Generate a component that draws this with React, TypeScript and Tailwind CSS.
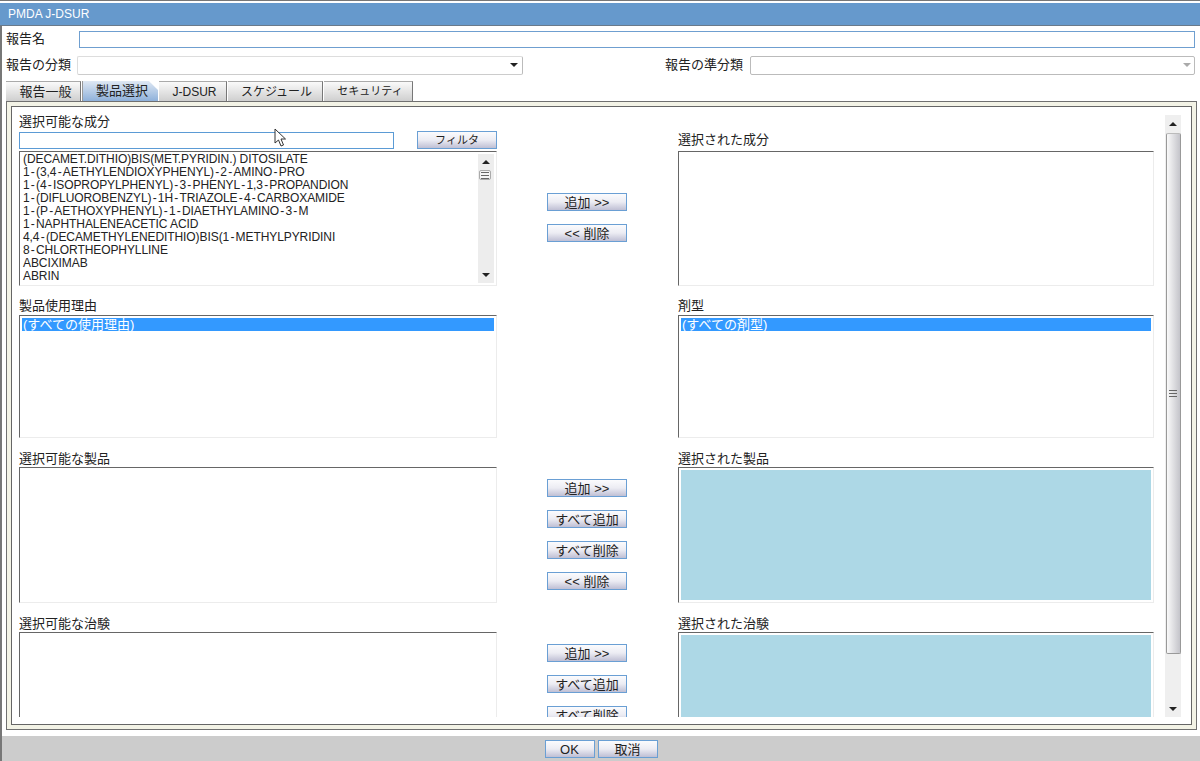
const font = '"Liberation Sans","Noto Sans CJK JP",sans-serif';

function Btn({ children, className = "w-[80px]", text = "text-[13px]" }: { children: React.ReactNode; className?: string; text?: string }) {
  return (
    <div className={`${className} ${text} h-[18px] shrink-0 border border-[#6a9fd4] bg-gradient-to-b from-[#fbfbfd] via-[#ececf3] via-50% to-[#bfbfd4] flex items-center justify-center leading-none text-[#222]`}>
      {children}
    </div>
  );
}

function ListBox({ className, children }: { className: string; children?: React.ReactNode }) {
  return (
    <div className={`${className} relative overflow-hidden bg-white border-t border-l border-t-[#666] border-l-[#666] border-r border-b border-r-[#ececec] border-b-[#ececec]`}>
      {children}
    </div>
  );
}

function Tri({ up, className = "border-x-[4px]" }: { up?: boolean; className?: string }) {
  return <div className={`${className} w-0 h-0 border-x-transparent ${up ? "border-b-[4px] border-b-[#222]" : "border-t-[4px] border-t-[#222]"}`} />;
}

function Grip() {
  return (
    <svg width="8" height="7" viewBox="0 0 8 7" className="block">
      <path d="M0 .5h8M0 3.5h8M0 6.5h8" stroke="#666" strokeWidth="1" fill="none" />
    </svg>
  );
}

function SelectedRow({ text }: { text: string }) {
  return (
    <div className="mx-[2px] mt-[2px] h-[13px] bg-[#3399ff] text-white text-[13px] leading-[13px] pl-[1px] whitespace-nowrap">{text}</div>
  );
}

function Label({ children, className = "" }: { children: React.ReactNode; className?: string }) {
  return <div className={`h-[18px] leading-[20px] text-[13px] text-[#222] whitespace-nowrap ${className}`}>{children}</div>;
}

function BlueFill() {
  return <div className="absolute inset-x-[2px] top-[2px] bottom-[2px] bg-[#add8e6]" />;
}

function Item({ text }: { text: string }) {
  const parts = text.split("-");
  return (
    <div>
      {parts.map((p, i) => (
        <span key={i}>
          {i > 0 && <span className="px-[1.25px]">-</span>}
          {p}
        </span>
      ))}
    </div>
  );
}

const items = [
  "(DECAMET.DITHIO)BIS(MET.PYRIDIN.) DITOSILATE",
  "1-(3,4-AETHYLENDIOXYPHENYL)-2-AMINO-PRO",
  "1-(4-ISOPROPYLPHENYL)-3-PHENYL-1,3-PROPANDION",
  "1-(DIFLUOROBENZYL)-1H-TRIAZOLE-4-CARBOXAMIDE",
  "1-(P-AETHOXYPHENYL)-1-DIAETHYLAMINO-3-M",
  "1-NAPHTHALENEACETIC ACID",
  "4,4-(DECAMETHYLENEDITHIO)BIS(1-METHYLPYRIDINI",
  "8-CHLORTHEOPHYLLINE",
  "ABCIXIMAB",
  "ABRIN",
];

const tabs = [
  ["報告一般", "w-[75px] pl-[5px] text-[13px]"],
  ["製品選択", "w-[76px] pl-[3px] text-[13px]"],
  ["J-DSUR", "w-[68px] pl-[4px] text-[12px]"],
  ["スケジュール", "w-[95px] pl-[3px] text-[12px]"],
  ["セキュリティ", "w-[89px] pl-[4px] text-[11px]"],
];

const grid = "grid grid-cols-[478px_50px_80px_51px_476px]";

export default function App() {
  return (
    <div className="relative w-[1200px] h-[761px] overflow-hidden bg-white flex flex-col text-[#222]" style={{ fontFamily: font }}>
      <div className="h-[3px] shrink-0 border-t border-t-[#777] bg-white" />
      <div className="h-[23px] shrink-0 bg-[#6699cc] border-b border-b-[#6a7a8a] text-white text-[12px] flex items-center pl-[8px]">PMDA J-DSUR</div>

      <div className="flex-1 flex flex-col border-l-2 border-l-[#777] min-h-0">
        <div className="h-[26px] shrink-0 flex items-center pl-[4px] pr-[5px]">
          <span className="w-[73px] text-[13px]">報告名</span>
          <div className="flex-1 h-[17px] border border-[#6f9fd0] bg-white" />
        </div>

        <div className="h-[26px] shrink-0 flex items-center pl-[4px] pr-[5px]">
          <span className="w-[71px] text-[13px] whitespace-nowrap">報告の分類</span>
          <div className="w-[446px] h-[19px] border border-[#ddd] rounded-[2px] border-r-[#bbb] border-b-[#ccc] flex items-center justify-end pr-[3px]">
            <Tri className="border-x-[4px] mr-[1px]" />
          </div>
          <span className="ml-[142px] w-[85px] text-[13px] whitespace-nowrap">報告の準分類</span>
          <div className="flex-1 h-[19px] border border-[#bbb] rounded-[2px] flex items-center justify-end pr-[3px]">
            <div className="w-0 h-0 border-x-[4px] border-x-transparent border-t-[4px] border-t-[#aaa]" />
          </div>
        </div>

        <div className="h-[20px] mt-[3px] shrink-0 flex pl-[4px] gap-[1px]">
          {tabs.map(([t, w], i) =>
            i === 1 ? (
              <div key={t} className={`${w} flex items-center justify-center bg-gradient-to-b from-[#dfe8f3] to-[#8fb1da] border-l border-[#999] [clip-path:polygon(0_0,88%_0,100%_45%,100%_100%,0_100%)]`}>{t}</div>
            ) : (
              <div key={t} className={`${w} flex items-center justify-center bg-gradient-to-b from-[#fafafa] to-[#cfcfcf] border-r border-t border-[#777] border-t-[#aaa]`}>{t}</div>
            )
          )}
        </div>

        <div className="h-[629px] shrink-0 ml-[4px] mr-[3px] border border-[#707070] bg-[#f3f3e6] p-[4px]">
          <div className="h-full border border-[#666] bg-white flex pl-[7px] pt-[5px] pb-[7px]">
            <div className="w-[1142px] overflow-hidden shrink-0">
              {/* section 1 */}
              <div className={grid}>
                <div>
                  <Label className="mb-px">選択可能な成分</Label>
                  <div className="flex items-center justify-between mb-[2px]">
                    <div className="w-[375px] h-[17px] border border-[#5b9bd5]" />
                    <Btn text="text-[11px]">フィルタ</Btn>
                  </div>
                  <ListBox className="h-[135px]">
                    <div className="pl-[3px] pt-[1px] text-[12px] leading-[13px] tracking-[-0.08px] text-[#222] whitespace-nowrap">
                      {items.map((x) => <Item key={x} text={x} />)}
                    </div>
                    <div className="absolute right-[2px] top-[2px] bottom-[2px] w-[16px] bg-[#ededed] flex flex-col items-center justify-between py-[6px]">
                      <Tri up />
                      <Tri />
                    </div>
                    <div className="absolute right-[5px] top-[18px] w-[12px] h-[10px] border border-[#aaa] rounded-[2px] bg-[#f4f4f4] flex items-center justify-center">
                      <Grip />
                    </div>
                  </ListBox>
                </div>
                <div />
                <div className="pt-[81px] flex flex-col gap-[13px]">
                  <Btn>追加 &gt;&gt;</Btn>
                  <Btn>&lt;&lt; 削除</Btn>
                </div>
                <div />
                <div className="flex flex-col justify-end">
                  <Label className="mb-[3px]">選択された成分</Label>
                  <ListBox className="h-[135px]" />
                </div>
              </div>

              {/* section 2 */}
              <div className={`${grid} mt-[10px]`}>
                <div>
                  <Label className="mb-px">製品使用理由</Label>
                  <ListBox className="h-[123px]"><SelectedRow text="(すべての使用理由)" /></ListBox>
                </div>
                <div />
                <div />
                <div />
                <div>
                  <Label className="mb-px">剤型</Label>
                  <ListBox className="h-[123px]"><SelectedRow text="(すべての剤型)" /></ListBox>
                </div>
              </div>

              {/* section 3 */}
              <div className={`${grid} mt-[11px]`}>
                <div>
                  <Label>選択可能な製品</Label>
                  <ListBox className="h-[136px]" />
                </div>
                <div />
                <div className="pt-[30px] flex flex-col gap-[13px]">
                  <Btn>追加 &gt;&gt;</Btn>
                  <Btn>すべて追加</Btn>
                  <Btn>すべて削除</Btn>
                  <Btn>&lt;&lt; 削除</Btn>
                </div>
                <div />
                <div>
                  <Label>選択された製品</Label>
                  <ListBox className="h-[136px]"><BlueFill /></ListBox>
                </div>
              </div>

              {/* section 4 */}
              <div className={`${grid} mt-[11px]`}>
                <div>
                  <Label>選択可能な治験</Label>
                  <ListBox className="h-[136px]" />
                </div>
                <div />
                <div className="pt-[30px] flex flex-col gap-[13px]">
                  <Btn>追加 &gt;&gt;</Btn>
                  <Btn>すべて追加</Btn>
                  <Btn>すべて削除</Btn>
                </div>
                <div />
                <div>
                  <Label>選択された治験</Label>
                  <ListBox className="h-[136px]"><BlueFill /></ListBox>
                </div>
              </div>
            </div>

            {/* main scrollbar */}
            <div className="ml-[4px] mt-[3px] w-[16px] bg-[#efefef] flex flex-col items-center">
              <div className="h-[18px] flex items-center justify-center shrink-0"><Tri up /></div>
              <div className="w-[15px] h-[521px] border border-[#999] border-t-[#bbb] rounded-[2px] bg-gradient-to-r from-[#fafafa] to-[#c4c4ca] flex items-center justify-center shrink-0">
                <Grip />
              </div>
              <div className="flex-1" />
              <div className="h-[16px] flex items-center justify-center shrink-0"><Tri /></div>
            </div>
          </div>
        </div>

        <div className="mt-[6px] flex-1 bg-[#cccccc] flex justify-center items-start pt-[4px] gap-[3px]">
          <Btn className="w-[50px]">OK</Btn>
          <Btn className="w-[60px]">取消</Btn>
        </div>
      </div>

      {/* mouse pointer */}
      <svg width="14" height="20" viewBox="0 0 14 20" className="absolute left-[274px] top-[128px]">
        <path d="M1 1v14l3.5-3 2.5 6 2.5-1-2.5-6h4.500z" fill="#fff" stroke="#333" strokeWidth="1" />
      </svg>
    </div>
  );
}
